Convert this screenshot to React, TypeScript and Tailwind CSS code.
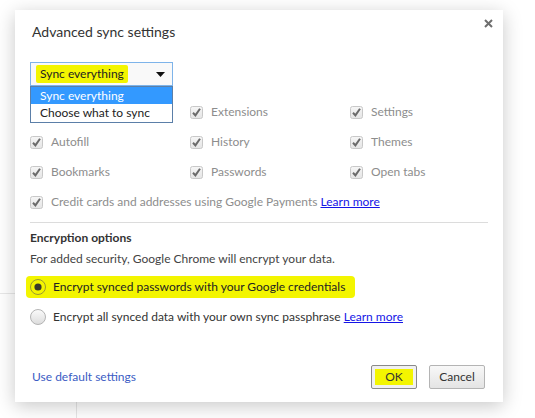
const font = { fontFamily: 'Lato, "Noto Sans", Arial, sans-serif' };

function CheckBox() {
  return (
    <svg width="13" height="13" viewBox="0 0 13 13" className="shrink-0">
      <defs>
        <linearGradient id="cbg" x1="0" y1="0" x2="0" y2="1">
          <stop offset="0" stopColor="#f6f6f6" />
          <stop offset="1" stopColor="#e4e4e4" />
        </linearGradient>
      </defs>
      <rect x="0.5" y="0.5" width="12" height="12" rx="2" fill="url(#cbg)" stroke="#c8c8c8" />
      <path d="M3 6.8 L5.4 9.4 L10 2.8" fill="none" stroke="#6a6a6a" strokeWidth="2" />
    </svg>
  );
}

function Radio({ checked }: { checked?: boolean }) {
  return (
    <svg width="16" height="16" viewBox="0 0 16 16" className="shrink-0">
      <defs>
        <linearGradient id="rbg" x1="0" y1="0" x2="0" y2="1">
          <stop offset="0" stopColor="#fbfbfb" />
          <stop offset="1" stopColor="#dcdcdc" />
        </linearGradient>
      </defs>
      <circle cx="8" cy="8" r="7.5" fill={checked ? "none" : "url(#rbg)"} stroke={checked ? "#9a9a30" : "#b4b4b4"} />
      {checked && <circle cx="8" cy="8" r="3.6" fill="#3a3a2a" />}
    </svg>
  );
}

function Item({ label, link }: { label: string; link?: boolean }) {
  return (
    <div className="flex items-center gap-[8px] h-[30px]">
      <CheckBox />
      <span className="text-[#8d8d8d]">
        {label}
        {link && (
          <>
            {" "}
            <span className="text-[#1515e6] underline">Learn more</span>
          </>
        )}
      </span>
    </div>
  );
}

export default function App() {
  return (
    <div className="relative w-[535px] h-[418px] bg-white overflow-hidden text-[12px] leading-[18px]" style={font}>
      {/* page behind the dialog */}
      <div className="absolute left-0 top-[293px] w-[15px] h-px bg-[#e8e8e8]" />
      <div className="absolute left-[76px] top-[402px] w-px h-[16px] bg-[#e6e6e6]" />

      <div className="absolute left-[15px] top-[10px] w-[488px] h-[392px] bg-white shadow-[0_4px_18px_rgba(0,0,0,0.22)] flex flex-col px-[15px]">
        <div className="absolute right-[10px] top-[9px]">
          <svg width="9" height="9" viewBox="0 0 9 9">
            <path d="M1 1 L8 8 M8 1 L1 8" stroke="#6e6e6e" strokeWidth="2" />
          </svg>
        </div>

        <div className="mt-[13px] ml-[2px] text-[14px] leading-[18px] text-[#333]">Advanced sync settings</div>

        <div className="relative mt-[21px] w-[143px] h-[24px] border border-[#7eb4ea] bg-[#f9f9f9] flex items-center pl-[5px] pr-[7px]">
          <span className="bg-[#f3f500] rounded-[2px] px-[4px] text-[#222] leading-[18px]">Sync everything</span>
          <svg className="ml-auto" width="9" height="5" viewBox="0 0 9 5">
            <path d="M0 0 H9 L4.5 5 Z" fill="#111" />
          </svg>
          <div className="absolute left-[-1px] top-[23px] w-[143px] border border-[#5b7fa8] bg-white z-10">
            <div className="h-[17px] bg-[#3399ff] text-white pl-[9px] leading-[17px]">Sync everything</div>
            <div className="h-[17px] text-[#222] pl-[9px] leading-[17px] mb-[1px]">Choose what to sync</div>
          </div>
        </div>

        <div className="mt-[11px] grid grid-cols-[160px_160px_1fr]">
          <div className="h-[30px]" />
          <Item label="Extensions" />
          <Item label="Settings" />
          <Item label="Autofill" />
          <Item label="History" />
          <Item label="Themes" />
          <Item label="Bookmarks" />
          <Item label="Passwords" />
          <Item label="Open tabs" />
        </div>
        <Item label="Credit cards and addresses using Google Payments" link />

        <div className="mt-[5px] h-px bg-[#dcdcdc]" />

        <div className="mt-[6px] font-bold text-[#333]">Encryption options</div>
        <div className="mt-[3px] text-[#444]">For added security, Google Chrome will encrypt your data.</div>

        <div className="mt-[4px] h-[30px] flex items-center">
          <div className="flex items-center gap-[7px] bg-[#f3f500] rounded-[4px] -ml-[4px] pl-[4px] pr-[10px] h-[22px]">
            <Radio checked />
            <span className="text-[#222]">Encrypt synced passwords with your Google credentials</span>
          </div>
        </div>
        <div className="h-[30px] flex items-center gap-[7px]">
          <Radio />
          <span className="text-[#333]">
            Encrypt all synced data with your own sync passphrase{" "}
            <span className="text-[#1515e6] underline">Learn more</span>
          </span>
        </div>

        <div className="mt-auto mb-[13px] flex items-center">
          <span className="ml-[2px] text-[#3b5cc4]">Use default settings</span>
          <div className="ml-auto mr-[3px] flex gap-[12px]">
            <button className="w-[46px] h-[24px] border border-[#8a8a8a] rounded-[2px] bg-[#f0f0f0] p-[3px]">
              <div className="w-full h-full bg-[#f3f500] text-[#333] flex items-center justify-center">OK</div>
            </button>
            <button className="w-[56px] h-[24px] border border-[#b4b4b4] rounded-[2px] bg-gradient-to-b from-[#f8f8f8] to-[#e4e4e4] text-[#333]">
              Cancel
            </button>
          </div>
        </div>
      </div>
    </div>
  );
}
